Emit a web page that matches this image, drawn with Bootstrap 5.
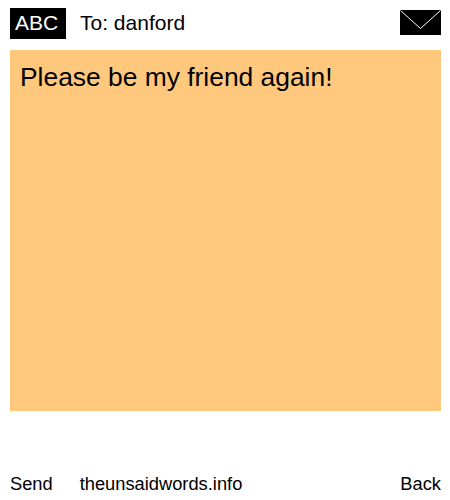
<!DOCTYPE html>
<html><head><meta charset="utf-8">
<link href="https://cdn.jsdelivr.net/npm/bootstrap@5.3.0/dist/css/bootstrap.min.css" rel="stylesheet">
<style>
html,body{height:500px;overflow:hidden;background:#fff}
body{font-family:"Liberation Sans",Arial,sans-serif;color:#000;padding:0 9px 0 10px}
.topbar{height:50px;padding-top:8px}
.abc{width:56px;height:31px;background:#000;color:#fff;font-size:21px;line-height:30px;text-align:center;padding-right:3px}
.tolabel{font-size:21px;line-height:30px;margin-left:14px}
.env{display:block;width:41px;height:25px;margin-top:2px}
.notepad{height:361px;background:#ffc87c;padding:10px;font-size:26.4px;line-height:34px}
.bottombar{height:89px;font-size:18.3px;line-height:22px;padding-bottom:5px}
.sitelink{margin-left:27px}
</style></head><body>
<div class="topbar d-flex align-items-start">
<div class="abc">ABC</div><div class="tolabel flex-grow-1">To: danford</div>
<svg class="env" viewBox="0 0 41 25"><rect width="41" height="25" fill="#000"/><path d="M0.5 0.5 20.5 18.5 40.5 0.5" fill="none" stroke="#fff"/></svg>
</div>
<div class="notepad">Please be my friend again!</div>
<div class="bottombar d-flex align-items-end"><span>Send</span><span class="sitelink flex-grow-1">theunsaidwords.info</span><span>Back</span></div>
<script src="https://cdn.jsdelivr.net/npm/bootstrap@5.3.0/dist/js/bootstrap.bundle.min.js"></script>
</body></html>
